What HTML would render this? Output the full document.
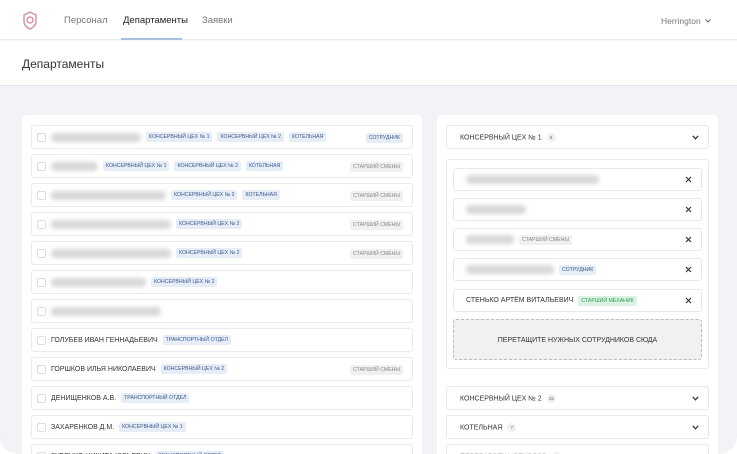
<!DOCTYPE html>
<html><head><meta charset="utf-8"><style>
*{box-sizing:border-box;margin:0;padding:0}
html,body{width:737px;height:454px;overflow:hidden;background:#fff}
body{font-family:"Liberation Sans",sans-serif;color:#333}
#w{position:absolute;left:0;top:0;width:737px;height:454px;background:#f1f3f6;border-radius:0 0 18px 18px;overflow:hidden}
#hdr{position:absolute;left:0;top:0;width:737px;height:40px;background:#fff;border-bottom:1px solid #e8eaee}
.nav{position:absolute;top:15px;font-size:9.5px;color:#777}
#title{position:absolute;left:0;top:41px;width:737px;height:45px;background:#fff;border-bottom:1px solid #e2e5ea}
#title span{position:absolute;left:22px;top:16px;font-size:12px;color:#333}
.card{position:absolute;background:#fff;border-radius:5px}
.row{position:absolute;left:31px;width:382px;height:24px;border:1px solid #e9ebef;border-radius:3px;background:#fff}
.cb{position:absolute;left:5px;top:7px;width:9px;height:9px;border:1px solid #ddd;border-radius:2px}
.in{position:absolute;left:19px;top:0;height:22px;display:flex;align-items:center;gap:5px;font-size:7px;color:#333;white-space:nowrap}
.bl{height:9px;background:#d8d8da;border-radius:4px;filter:blur(2px)}
.t{font-size:5.2px;padding:2px 3px;border-radius:2px;background:#e6edf7;color:#3d5a8a}
.g{background:#eef0f2;color:#888}
.gr{background:#dbf3e2;color:#2e9a55}
.rt{position:absolute;right:9px;top:7px}
.acc{position:absolute;left:446px;width:263px;height:24px;border:1px solid #e6e8ec;border-radius:3px;background:#fff;font-size:7px}
.acc .l{position:absolute;left:13px;top:7px}
.cnt{display:inline-block;margin-left:5px;width:9px;height:9px;border-radius:50%;background:#eef0f2;font-size:4.5px;text-align:center;line-height:9px;color:#666;vertical-align:middle}
.chev{position:absolute;right:9px;top:9px}
.it{position:absolute;left:453px;width:249px;height:23px;border:1px solid #e6e8ec;border-radius:3px;background:#fff}
.it .in{left:12px;height:21px}
.x{position:absolute;right:9px;top:7px}
</style></head><body><div id="w">
<div id="hdr">
<svg style="position:absolute;left:22px;top:11px" width="16" height="19" viewBox="0 0 16 19"><path d="M8 1 L14 4 L14 11 Q14 15 8 18 Q2 15 2 11 L2 4 Z" fill="none" stroke="#d88a9a" stroke-width="1.4"/><circle cx="8" cy="9" r="3" fill="none" stroke="#d88a9a" stroke-width="1.3"/></svg>
<span class="nav" style="left:64px">Персонал</span>
<span class="nav" style="left:123px;color:#222">Департаменты</span>
<div style="position:absolute;left:121px;top:38px;width:61px;height:2px;background:#a9bfe0"></div>
<span class="nav" style="left:202px">Заявки</span>
<span class="nav" style="left:661px;font-size:8.5px;top:16px">Herrington</span>
<svg style="position:absolute;left:705px;top:19px" width="6" height="4" viewBox="0 0 6 4"><path d="M0.5 0.5 L3 3 L5.5 0.5" fill="none" stroke="#666" stroke-width="1"/></svg>
</div>
<div id="title"><span>Департаменты</span></div>

<div class="card" style="left:22px;top:115px;width:400px;height:360px"></div>
<div class="card" style="left:437px;top:115px;width:281px;height:360px"></div>

<div class="row" style="top:125px"><div class="cb"></div><div class="in"><div class="bl" style="width:90px"></div><span class="t">КОНСЕРВНЫЙ ЦЕХ № 1</span><span class="t">КОНСЕРВНЫЙ ЦЕХ № 2</span><span class="t">КОТЕЛЬНАЯ</span></div><span class="t rt">СОТРУДНИК</span></div>
<div class="row" style="top:154px"><div class="cb"></div><div class="in"><div class="bl" style="width:47px"></div><span class="t">КОНСЕРВНЫЙ ЦЕХ № 1</span><span class="t">КОНСЕРВНЫЙ ЦЕХ № 2</span><span class="t">КОТЕЛЬНАЯ</span></div><span class="t g rt">СТАРШИЙ СМЕНЫ</span></div>
<div class="row" style="top:183px"><div class="cb"></div><div class="in"><div class="bl" style="width:115px"></div><span class="t">КОНСЕРВНЫЙ ЦЕХ № 2</span><span class="t">КОТЕЛЬНАЯ</span></div><span class="t g rt">СТАРШИЙ СМЕНЫ</span></div>
<div class="row" style="top:212px"><div class="cb"></div><div class="in"><div class="bl" style="width:120px"></div><span class="t">КОНСЕРВНЫЙ ЦЕХ № 2</span></div><span class="t g rt">СТАРШИЙ СМЕНЫ</span></div>
<div class="row" style="top:241px"><div class="cb"></div><div class="in"><div class="bl" style="width:120px"></div><span class="t">КОНСЕРВНЫЙ ЦЕХ № 2</span></div><span class="t g rt">СТАРШИЙ СМЕНЫ</span></div>
<div class="row" style="top:270px"><div class="cb"></div><div class="in"><div class="bl" style="width:95px"></div><span class="t">КОНСЕРВНЫЙ ЦЕХ № 2</span></div></div>
<div class="row" style="top:299px"><div class="cb"></div><div class="in"><div class="bl" style="width:110px"></div></div></div>
<div class="row" style="top:328px"><div class="cb"></div><div class="in">ГОЛУБЕВ ИВАН ГЕННАДЬЕВИЧ<span class="t">ТРАНСПОРТНЫЙ ОТДЕЛ</span></div></div>
<div class="row" style="top:357px"><div class="cb"></div><div class="in">ГОРШКОВ ИЛЬЯ НИКОЛАЕВИЧ<span class="t">КОНСЕРВНЫЙ ЦЕХ № 2</span></div><span class="t g rt">СТАРШИЙ СМЕНЫ</span></div>
<div class="row" style="top:386px"><div class="cb"></div><div class="in">ДЕНИЩЕНКОВ А.В.<span class="t">ТРАНСПОРТНЫЙ ОТДЕЛ</span></div></div>
<div class="row" style="top:415px"><div class="cb"></div><div class="in">ЗАХАРЕНКОВ Д.М.<span class="t">КОНСЕРВНЫЙ ЦЕХ № 1</span></div></div>
<div class="row" style="top:444px"><div class="cb"></div><div class="in">ЗУБЕНКО НИКИТА ЮРЬЕВИЧ<span class="t">ТРАНСПОРТНЫЙ ОТДЕЛ</span></div></div>

<div class="acc" style="top:125px"><span class="l">КОНСЕРВНЫЙ ЦЕХ № 1<span class="cnt">5</span></span><svg class="chev" width="7" height="5" viewBox="0 0 7 5"><path d="M0.8 0.8 L3.5 3.8 L6.2 0.8" fill="none" stroke="#333" stroke-width="1.2"/></svg></div>
<div style="position:absolute;left:446px;top:159px;width:263px;height:210px;border:1px solid #e9ebef;border-radius:3px;background:#fff"></div>
<div class="it" style="top:168px"><div class="in"><div class="bl" style="width:133px"></div></div><svg class="x" width="7" height="7" viewBox="0 0 7 7"><path d="M1 1L6 6M6 1L1 6" stroke="#333" stroke-width="1.2"/></svg></div>
<div class="it" style="top:198px"><div class="in"><div class="bl" style="width:60px"></div></div><svg class="x" width="7" height="7" viewBox="0 0 7 7"><path d="M1 1L6 6M6 1L1 6" stroke="#333" stroke-width="1.2"/></svg></div>
<div class="it" style="top:228px"><div class="in"><div class="bl" style="width:48px"></div><span class="t g">СТАРШИЙ СМЕНЫ</span></div><svg class="x" width="7" height="7" viewBox="0 0 7 7"><path d="M1 1L6 6M6 1L1 6" stroke="#333" stroke-width="1.2"/></svg></div>
<div class="it" style="top:258px"><div class="in"><div class="bl" style="width:88px"></div><span class="t">СОТРУДНИК</span></div><svg class="x" width="7" height="7" viewBox="0 0 7 7"><path d="M1 1L6 6M6 1L1 6" stroke="#333" stroke-width="1.2"/></svg></div>
<div class="it" style="top:289px"><div class="in">СТЕНЬКО АРТЁМ ВИТАЛЬЕВИЧ<span class="t gr">СТАРШИЙ МЕХАНИК</span></div><svg class="x" width="7" height="7" viewBox="0 0 7 7"><path d="M1 1L6 6M6 1L1 6" stroke="#333" stroke-width="1.2"/></svg></div>
<div style="position:absolute;left:453px;top:319px;width:249px;height:41px;border:1px dashed #bbb;border-radius:3px;background:#f1f1f2;font-size:7px;text-align:center;line-height:41px;color:#333">ПЕРЕТАЩИТЕ НУЖНЫХ СОТРУДНИКОВ СЮДА</div>

<div class="acc" style="top:386px"><span class="l">КОНСЕРВНЫЙ ЦЕХ № 2<span class="cnt">15</span></span><svg class="chev" width="7" height="5" viewBox="0 0 7 5"><path d="M0.8 0.8 L3.5 3.8 L6.2 0.8" fill="none" stroke="#333" stroke-width="1.2"/></svg></div>
<div class="acc" style="top:415px"><span class="l">КОТЕЛЬНАЯ<span class="cnt">7</span></span><svg class="chev" width="7" height="5" viewBox="0 0 7 5"><path d="M0.8 0.8 L3.5 3.8 L6.2 0.8" fill="none" stroke="#333" stroke-width="1.2"/></svg></div>
<div class="acc" style="top:444px"><span class="l" style="color:#999">ПЕРЕРАБОТКА ОТХОДОВ<span class="cnt">3</span></span></div>
</div></body></html>
